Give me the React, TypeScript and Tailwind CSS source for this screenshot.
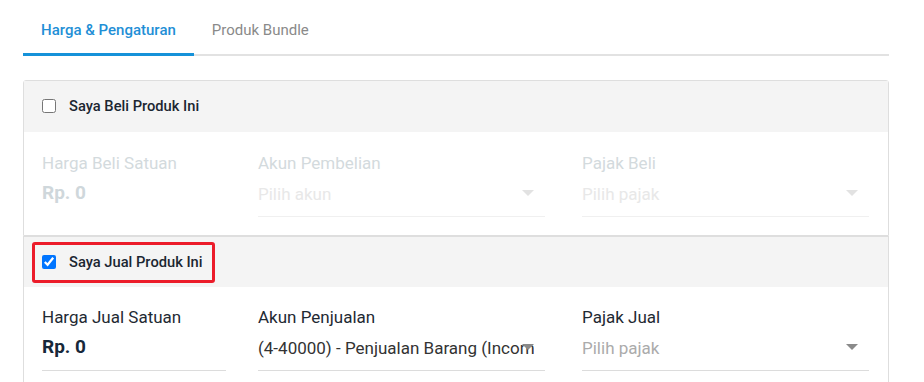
import React from "react";

type FieldProps = {
  label: string;
  disabled?: boolean;
};

const Arrow = ({ disabled }: { disabled?: boolean }) => (
  <svg
    width="12"
    height="6"
    viewBox="0 0 12 6"
    className="absolute right-[11px] top-[9px]"
  >
    <path d="M0 0 L12 0 L6 6 Z" fill={disabled ? "#e2e2e2" : "#8a8a8a"} />
  </svg>
);

const PriceField = ({ label, disabled }: FieldProps) => (
  <div className="w-[184px] shrink-0">
    <div
      className={`text-[17px] leading-[20px] ${
        disabled ? "text-[#d3dadd]" : "text-[#1f2a33]"
      }`}
    >
      {label}
    </div>
    <div
      className={`mt-[8px] pb-[11px] text-[19px] leading-[24px] font-bold border-b ${
        disabled
          ? "text-[#cfd7db] border-transparent"
          : "text-[#17283a] border-[#dcdcdc]"
      }`}
    >
      Rp. 0
    </div>
  </div>
);

const SelectField = ({
  label,
  value,
  placeholder,
  disabled,
  className,
}: FieldProps & { value?: string; placeholder: string; className?: string }) => (
  <div className={`w-[287px] shrink-0 ${className ?? ""}`}>
    <div
      className={`text-[17px] leading-[20px] ${
        disabled ? "text-[#d3dadd]" : "text-[#1f2a33]"
      }`}
    >
      {label}
    </div>
    <div
      className={`relative mt-[8px] pb-[11px] border-b ${
        disabled ? "border-[#f0f0f0]" : "border-[#dcdcdc]"
      }`}
    >
      <div
        className={`mr-[11px] pt-[2px] h-[24px] text-[17px] leading-[22px] whitespace-nowrap overflow-hidden ${
          value
            ? "text-[#333333]"
            : disabled
            ? "text-[#e8e8e8]"
            : "text-[#ababab]"
        }`}
      >
        {value ?? placeholder}
      </div>
      <Arrow disabled={disabled} />
    </div>
  </div>
);

export default function App() {
  return (
    <div
      className="min-h-screen bg-white px-[23px] pr-[35px]"
      style={{ fontFamily: "Roboto, 'Liberation Sans', sans-serif" }}
    >
      {/* tabs */}
      <div className="flex border-b-2 border-[#e2e2e2]">
        <div className="px-[18px] pt-[20px] pb-[13px] -mb-[2px] border-b-[3px] border-[#1592d9] text-[15px] leading-[20px] font-medium text-[#1f8fd6]">
          Harga &amp; Pengaturan
        </div>
        <div className="px-[18px] pt-[20px] pb-[13px] text-[15px] leading-[20px] text-[#8a8a8a]">
          Produk Bundle
        </div>
      </div>

      {/* beli */}
      <div className="mt-[24px] border border-[#dedede] rounded-t-[3px]">
        <div className="h-[51px] bg-[#f4f4f4] flex items-center px-[18px] pb-[1px]">
          <input
            type="checkbox"
            readOnly
            className="w-[14px] h-[14px] m-0 accent-[#1a73e8]"
          />
          <span className="ml-[13px] text-[14.7px] font-medium text-[#1b2631]">
            Saya Beli Produk Ini
          </span>
        </div>
        <div className="flex px-[18px] pt-[21px] pb-[18px]">
          <PriceField label="Harga Beli Satuan" disabled />
          <SelectField
            label="Akun Pembelian"
            placeholder="Pilih akun"
            disabled
            className="ml-[32px]"
          />
          <SelectField
            label="Pajak Beli"
            placeholder="Pilih pajak"
            disabled
            className="ml-[37px]"
          />
        </div>
      </div>

      {/* jual */}
      <div className="border border-[#dedede]">
        <div className="h-[50px] bg-[#f4f4f4] flex items-center px-[8px]">
          <div className="h-[41px] flex items-center pl-[7px] pr-[9px] border-[3px] border-[#ec1c2a] rounded-[3px]">
            <input
              type="checkbox"
              defaultChecked
              className="w-[14px] h-[14px] m-0"
            />
            <span className="ml-[13px] text-[14.7px] font-medium text-[#1b2631]">
              Saya Jual Produk Ini
            </span>
          </div>
        </div>
        <div className="flex px-[18px] pt-[20px] pb-[18px]">
          <PriceField label="Harga Jual Satuan" />
          <SelectField
            label="Akun Penjualan"
            placeholder="Pilih akun"
            value="(4-40000) - Penjualan Barang (Income)"
            className="ml-[32px]"
          />
          <SelectField
            label="Pajak Jual"
            placeholder="Pilih pajak"
            className="ml-[37px]"
          />
        </div>
      </div>
    </div>
  );
}
